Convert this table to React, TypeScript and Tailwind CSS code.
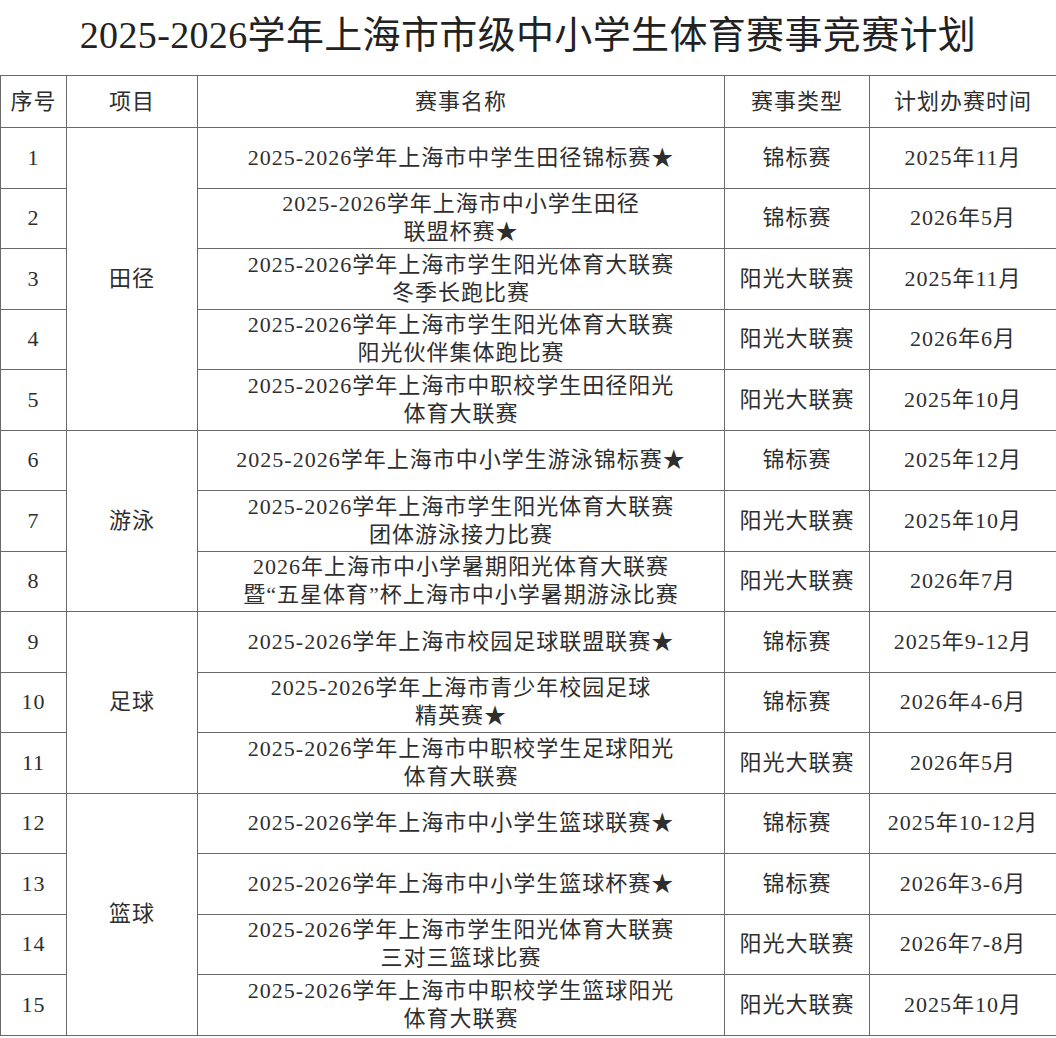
import React from 'react';

type Row = {
  no: number;
  name: React.ReactNode;
  type: string;
  time: string;
};

type Group = {
  sport: string;
  rows: Row[];
};

const groups: Group[] = [
  {
    sport: '田径',
    rows: [
      { no: 1, name: '2025-2026学年上海市中学生田径锦标赛★', type: '锦标赛', time: '2025年11月' },
      { no: 2, name: <>2025-2026学年上海市中小学生田径<br />联盟杯赛★</>, type: '锦标赛', time: '2026年5月' },
      { no: 3, name: <>2025-2026学年上海市学生阳光体育大联赛<br />冬季长跑比赛</>, type: '阳光大联赛', time: '2025年11月' },
      { no: 4, name: <>2025-2026学年上海市学生阳光体育大联赛<br />阳光伙伴集体跑比赛</>, type: '阳光大联赛', time: '2026年6月' },
      { no: 5, name: <>2025-2026学年上海市中职校学生田径阳光<br />体育大联赛</>, type: '阳光大联赛', time: '2025年10月' },
    ],
  },
  {
    sport: '游泳',
    rows: [
      { no: 6, name: '2025-2026学年上海市中小学生游泳锦标赛★', type: '锦标赛', time: '2025年12月' },
      { no: 7, name: <>2025-2026学年上海市学生阳光体育大联赛<br />团体游泳接力比赛</>, type: '阳光大联赛', time: '2025年10月' },
      { no: 8, name: <>2026年上海市中小学暑期阳光体育大联赛<br />暨“五星体育”杯上海市中小学暑期游泳比赛</>, type: '阳光大联赛', time: '2026年7月' },
    ],
  },
  {
    sport: '足球',
    rows: [
      { no: 9, name: '2025-2026学年上海市校园足球联盟联赛★', type: '锦标赛', time: '2025年9-12月' },
      { no: 10, name: <>2025-2026学年上海市青少年校园足球<br />精英赛★</>, type: '锦标赛', time: '2026年4-6月' },
      { no: 11, name: <>2025-2026学年上海市中职校学生足球阳光<br />体育大联赛</>, type: '阳光大联赛', time: '2026年5月' },
    ],
  },
  {
    sport: '篮球',
    rows: [
      { no: 12, name: '2025-2026学年上海市中小学生篮球联赛★', type: '锦标赛', time: '2025年10-12月' },
      { no: 13, name: '2025-2026学年上海市中小学生篮球杯赛★', type: '锦标赛', time: '2026年3-6月' },
      { no: 14, name: <>2025-2026学年上海市学生阳光体育大联赛<br />三对三篮球比赛</>, type: '阳光大联赛', time: '2026年7-8月' },
      { no: 15, name: <>2025-2026学年上海市中职校学生篮球阳光<br />体育大联赛</>, type: '阳光大联赛', time: '2025年10月' },
    ],
  },
];

const cell = 'border-[1.5px] border-[#6a6a6a] text-center align-middle p-0';

export default function App() {
  return (
    <div
      className="w-[1056px] bg-white text-[#2e2e2e]"
      style={{ fontFamily: '"Liberation Serif", "Noto Sans CJK SC", serif' }}
    >
      <h1 className="h-[75px] flex items-center justify-center text-[38px] leading-none tracking-[0.35px] text-[#222] pb-[6px]">
        2025-2026学年上海市市级中小学生体育赛事竞赛计划
      </h1>

      <table className="w-[1056px] table-fixed border-collapse text-[22px] leading-[28px] tracking-[1px]">
        <colgroup>
          <col className="w-[66px]" />
          <col className="w-[131px]" />
          <col className="w-[527px]" />
          <col className="w-[145px]" />
          <col className="w-[187px]" />
        </colgroup>
        <thead>
          <tr className="h-[52px]">
            <th className={`${cell} font-normal`}>序号</th>
            <th className={`${cell} font-normal`}>项目</th>
            <th className={`${cell} font-normal`}>赛事名称</th>
            <th className={`${cell} font-normal`}>赛事类型</th>
            <th className={`${cell} font-normal`}>计划办赛时间</th>
          </tr>
        </thead>
        <tbody>
          {groups.map((group) =>
            group.rows.map((row, i) => (
              <tr key={row.no} className="h-[60.5px]">
                <td className={cell}>{row.no}</td>
                {i === 0 && (
                  <td className={cell} rowSpan={group.rows.length}>
                    {group.sport}
                  </td>
                )}
                <td className={`${cell} whitespace-nowrap`}>{row.name}</td>
                <td className={cell}>{row.type}</td>
                <td className={cell}>{row.time}</td>
              </tr>
            ))
          )}
        </tbody>
      </table>
    </div>
  );
}
